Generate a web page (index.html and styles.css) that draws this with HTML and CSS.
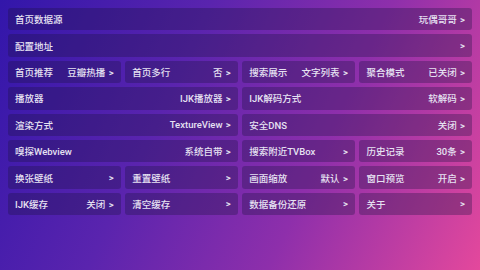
FILE: index.html
```html
<!DOCTYPE html>
<html lang="zh-CN">
<head>
<meta charset="utf-8">
<link rel="stylesheet" href="styles.css">
</head>
<body>
<div class="grid">
  <div class="tile span4"><span class="label">首页数据源</span><span class="value">玩偶哥哥 <b>&gt;</b></span></div>
  <div class="tile span4"><span class="label">配置地址</span><span class="value"><b>&gt;</b></span></div>
  <div class="tile"><span class="label">首页推荐</span><span class="value">豆瓣热播 <b>&gt;</b></span></div>
  <div class="tile"><span class="label">首页多行</span><span class="value">否 <b>&gt;</b></span></div>
  <div class="tile"><span class="label">搜索展示</span><span class="value">文字列表 <b>&gt;</b></span></div>
  <div class="tile"><span class="label">聚合模式</span><span class="value">已关闭 <b>&gt;</b></span></div>
  <div class="tile span2"><span class="label">播放器</span><span class="value">IJK播放器 <b>&gt;</b></span></div>
  <div class="tile span2"><span class="label">IJK解码方式</span><span class="value">软解码 <b>&gt;</b></span></div>
  <div class="tile span2"><span class="label">渲染方式</span><span class="value">TextureView <b>&gt;</b></span></div>
  <div class="tile span2"><span class="label">安全DNS</span><span class="value">关闭 <b>&gt;</b></span></div>
  <div class="tile span2"><span class="label">嗅探Webview</span><span class="value">系统自带 <b>&gt;</b></span></div>
  <div class="tile"><span class="label">搜索附近TVBox</span><span class="value"><b>&gt;</b></span></div>
  <div class="tile"><span class="label">历史记录</span><span class="value">30条 <b>&gt;</b></span></div>
  <div class="tile"><span class="label">换张壁纸</span><span class="value"><b>&gt;</b></span></div>
  <div class="tile"><span class="label">重置壁纸</span><span class="value"><b>&gt;</b></span></div>
  <div class="tile"><span class="label">画面缩放</span><span class="value">默认 <b>&gt;</b></span></div>
  <div class="tile"><span class="label">窗口预览</span><span class="value">开启 <b>&gt;</b></span></div>
  <div class="tile"><span class="label">IJK缓存</span><span class="value">关闭 <b>&gt;</b></span></div>
  <div class="tile"><span class="label">清空缓存</span><span class="value"><b>&gt;</b></span></div>
  <div class="tile"><span class="label">数据备份还原</span><span class="value"><b>&gt;</b></span></div>
  <div class="tile"><span class="label">关于</span><span class="value"><b>&gt;</b></span></div>
</div>
</body>
</html>
```

FILE: styles.css
```css
html, body {
  margin: 0;
  padding: 0;
  width: 480px;
  height: 270px;
  overflow: hidden;
}
body {
  background: linear-gradient(115deg, #3216aa 0%, #5a24ae 35%, #8e2fab 65%, #e4489c 100%);
  font-family: "Roboto", "Noto Sans CJK SC", sans-serif;
  color: #e6e2f2;
}
.grid {
  display: grid;
  grid-template-columns: repeat(4, 1fr);
  grid-auto-rows: 22.4px;
  row-gap: 4px;
  column-gap: 4.5px;
  padding: 8px;
}
.tile {
  background: rgba(28, 18, 64, 0.32);
  border-radius: 3px;
  display: flex;
  align-items: center;
  justify-content: space-between;
  padding: 0 7px 0 7px;
  font-size: 9.5px;
  font-weight: 500;
  white-space: nowrap;
}
.span4 { grid-column: span 4; }
.span2 { grid-column: span 2; }
.value b {
  font-weight: 700;
  margin-left: 1px;
}
```
